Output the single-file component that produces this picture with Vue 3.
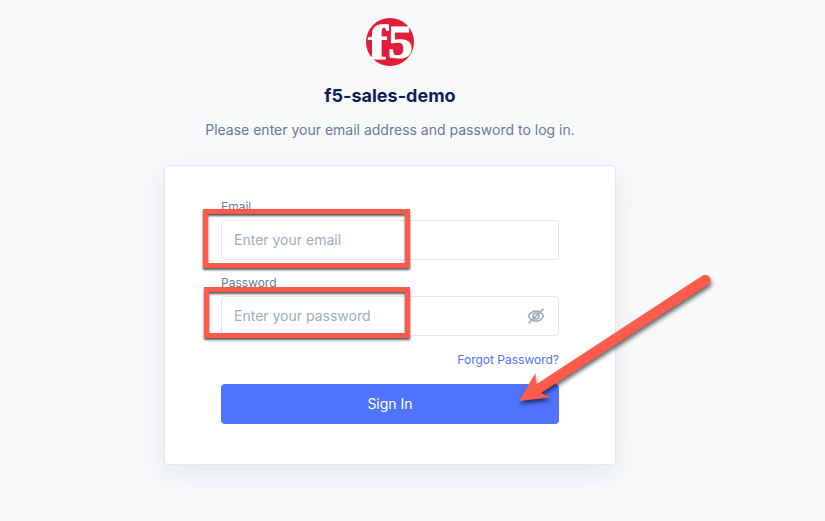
<script setup>
import { ref } from 'vue'

const email = ref('')
const password = ref('')
</script>

<template>
  <main class="page">
    <svg class="logo" viewBox="0 0 48 48" role="img" aria-label="f5">
      <circle cx="24" cy="24" r="24" fill="#e21d38" />
      <g class="mark">
        <text transform="translate(2 41) scale(1.24 1)" font-size="48">f</text>
        <text transform="translate(22 39.5) scale(1.08 1)" font-size="46">5</text>
      </g>
    </svg>
    <h1 class="title">f5-sales-demo</h1>
    <p class="intro">Please enter your email address and password to log in.</p>

    <form class="card" @submit.prevent>
      <label class="label" for="email">Email</label>
      <div class="field">
        <input id="email" v-model="email" type="email" placeholder="Enter your email" />
      </div>
      <label class="label second" for="password">Password</label>
      <div class="field">
        <input id="password" v-model="password" type="password" placeholder="Enter your password" />
        <svg class="eye" viewBox="0 0 18 18" fill="none" stroke="#99a2b8" stroke-width="1.5">
          <path d="M1.5 9C3.2 5.6 5.8 3.9 9 3.9S14.8 5.6 16.5 9C14.8 12.4 12.2 14.1 9 14.1S3.2 12.4 1.5 9Z" />
          <circle cx="9" cy="9" r="3" />
          <path d="M1.7 16.2 16.4 1.8" />
        </svg>
      </div>
      <a class="forgot" href="#">Forgot Password?</a>
      <button class="submit" type="submit">Sign In</button>
    </form>

    <div class="callout callout-email"></div>
    <div class="callout callout-password"></div>
    <svg class="arrow" viewBox="0 0 825 521">
      <path d="M519 401 535.5 373 536 384.5 702.3 275.8A5.3 5.3 0 0 1 708.2 284.6L541 393 551 397.2Z" fill="#ff5b4c" />
    </svg>
  </main>
</template>

<style>
body {
  background: #f7f9fb;
  overflow: hidden;
}
</style>

<style scoped>
.page {
  position: relative;
  box-sizing: border-box;
  width: 825px;
  height: 521px;
  padding: 18px 45px 0 0;
  display: flex;
  flex-direction: column;
  align-items: center;
  font-family: Inter, sans-serif;
  background: #f7f9fb;
}
.logo {
  width: 48px;
  height: 48px;
  display: block;
  overflow: visible;
}
.mark {
  fill: #fff;
  stroke: #fff;
  stroke-width: 0.9px;
  font-family: "Liberation Serif", serif;
  font-weight: 700;
}
.title {
  margin: 18px 0 0;
  font-size: 18px;
  line-height: 24px;
  font-weight: 700;
  color: #0f1e57;
}
.intro {
  margin: 12px 0 0;
  font-size: 14px;
  line-height: 20px;
  color: #6d7a95;
}
.card {
  box-sizing: border-box;
  width: 452px;
  height: 300px;
  margin-top: 25px;
  padding: 33px 56px 0;
  display: flex;
  flex-direction: column;
  background: #fff;
  border: 1px solid #e4e7f3;
  border-radius: 4px;
  box-shadow: 0 8px 28px rgba(30, 40, 80, 0.08);
}
.label {
  font-size: 12px;
  line-height: 16px;
  color: #6d7a95;
  margin-bottom: 5px;
}
.second {
  margin-top: 15px;
}
.field {
  box-sizing: border-box;
  height: 40px;
  padding: 0 13px 0 12px;
  display: flex;
  align-items: center;
  border: 1px solid #e3e5f4;
  border-radius: 4px;
}
.field input {
  flex: 1;
  min-width: 0;
  padding: 0;
  border: 0;
  outline: 0;
  background: transparent;
  font: 14px/20px Inter, sans-serif;
}
.field input::placeholder {
  color: #a2abc0;
  opacity: 1;
}
.eye {
  width: 18px;
  height: 18px;
}
.forgot {
  align-self: flex-end;
  margin-top: 16px;
  font-size: 12px;
  line-height: 16px;
  color: #4f73ff;
  text-decoration: none;
}
.submit {
  height: 40px;
  margin-top: 16px;
  padding: 0;
  border: 0;
  border-radius: 4px;
  background: #4f73ff;
  color: #fff;
  font: 14px/20px Inter, sans-serif;
}
.callout {
  position: absolute;
  box-sizing: border-box;
  border: 5px solid #ff5b4c;
  filter: drop-shadow(0 2px 1px rgba(0, 0, 0, 0.65));
}
.callout-email {
  left: 203px;
  top: 209px;
  width: 207px;
  height: 59px;
}
.callout-password {
  left: 204px;
  top: 287px;
  width: 206px;
  height: 51px;
}
.arrow {
  position: absolute;
  left: 0;
  top: 0;
  width: 825px;
  height: 521px;
  pointer-events: none;
  filter: drop-shadow(1px 3px 2px rgba(0, 0, 0, 0.6));
}
</style>
